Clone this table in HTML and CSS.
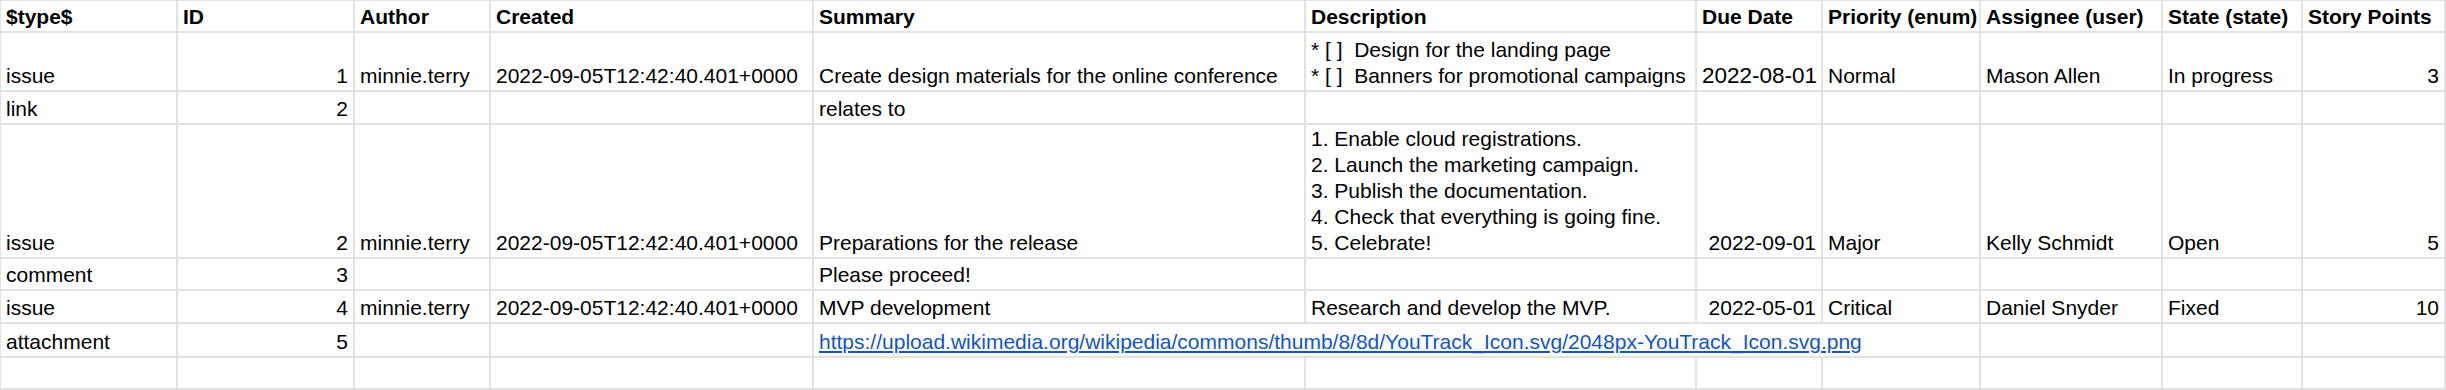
FILE: index.html
```html
<!DOCTYPE html>
<html lang="en">
<head>
<meta charset="utf-8">
<title>Sheet</title>
<link rel="stylesheet" href="styles.css">
</head>
<body>
<div class="sheet">
  <div class="cell head">$type$</div>
  <div class="cell head">ID</div>
  <div class="cell head">Author</div>
  <div class="cell head">Created</div>
  <div class="cell head">Summary</div>
  <div class="cell head">Description</div>
  <div class="cell head">Due Date</div>
  <div class="cell head">Priority (enum)</div>
  <div class="cell head">Assignee (user)</div>
  <div class="cell head">State (state)</div>
  <div class="cell head">Story Points</div>

  <div class="cell">issue</div>
  <div class="cell num">1</div>
  <div class="cell">minnie.terry</div>
  <div class="cell">2022-09-05T12:42:40.401+0000</div>
  <div class="cell">Create design materials for the online conference</div>
  <div class="cell"><div class="lines">* [ ]  Design for the landing page
* [ ]  Banners for promotional campaigns</div></div>
  <div class="cell big">2022-08-01</div>
  <div class="cell">Normal</div>
  <div class="cell">Mason Allen</div>
  <div class="cell">In progress</div>
  <div class="cell num">3</div>

  <div class="cell">link</div>
  <div class="cell num">2</div>
  <div class="cell"></div>
  <div class="cell"></div>
  <div class="cell">relates to</div>
  <div class="cell"></div>
  <div class="cell"></div>
  <div class="cell"></div>
  <div class="cell"></div>
  <div class="cell"></div>
  <div class="cell"></div>

  <div class="cell">issue</div>
  <div class="cell num">2</div>
  <div class="cell">minnie.terry</div>
  <div class="cell">2022-09-05T12:42:40.401+0000</div>
  <div class="cell">Preparations for the release</div>
  <div class="cell"><div class="lines">1. Enable cloud registrations.
2. Launch the marketing campaign.
3. Publish the documentation.
4. Check that everything is going fine.
5. Celebrate!</div></div>
  <div class="cell num">2022-09-01</div>
  <div class="cell">Major</div>
  <div class="cell">Kelly Schmidt</div>
  <div class="cell">Open</div>
  <div class="cell num">5</div>

  <div class="cell">comment</div>
  <div class="cell num">3</div>
  <div class="cell"></div>
  <div class="cell"></div>
  <div class="cell">Please proceed!</div>
  <div class="cell"></div>
  <div class="cell"></div>
  <div class="cell"></div>
  <div class="cell"></div>
  <div class="cell"></div>
  <div class="cell"></div>

  <div class="cell">issue</div>
  <div class="cell num">4</div>
  <div class="cell">minnie.terry</div>
  <div class="cell">2022-09-05T12:42:40.401+0000</div>
  <div class="cell">MVP development</div>
  <div class="cell">Research and develop the MVP.</div>
  <div class="cell num">2022-05-01</div>
  <div class="cell">Critical</div>
  <div class="cell">Daniel Snyder</div>
  <div class="cell">Fixed</div>
  <div class="cell num">10</div>

  <div class="cell">attachment</div>
  <div class="cell num">5</div>
  <div class="cell"></div>
  <div class="cell"></div>
  <div class="cell span4"><a class="link" href="#">https://upload.wikimedia.org/wikipedia/commons/thumb/8/8d/YouTrack_Icon.svg/2048px-YouTrack_Icon.svg.png</a></div>
  <div class="cell"></div>
  <div class="cell"></div>
  <div class="cell"></div>

  <div class="cell"></div>
  <div class="cell"></div>
  <div class="cell"></div>
  <div class="cell"></div>
  <div class="cell"></div>
  <div class="cell"></div>
  <div class="cell"></div>
  <div class="cell"></div>
  <div class="cell"></div>
  <div class="cell"></div>
  <div class="cell"></div>
</div>
</body>
</html>
```

FILE: styles.css
```css
* {
  box-sizing: border-box;
}

html,
body {
  margin: 0;
  padding: 0;
  background: #ffffff;
  overflow: hidden;
}

.sheet {
  display: grid;
  grid-template-columns: 177px 177px 136px 323px 492px 391px 126px 158px 182px 140px 143px;
  grid-template-rows: 32px 59px 33px 134px 32px 33px 34px 32px;
  width: max-content;
  border-top: 1px solid #e2e2e2;
  border-left: 1px solid #e2e2e2;
  font-family: "Liberation Sans", Arial, sans-serif;
  font-size: 21px;
  line-height: 26px;
  color: #000000;
}

.cell {
  display: flex;
  align-items: flex-end;
  justify-content: flex-start;
  padding: 0 5px 1px 5px;
  border-right: 2px solid #e2e2e2;
  border-bottom: 2px solid #e2e2e2;
  white-space: nowrap;
  overflow: hidden;
  min-width: 0;
}

.head {
  font-weight: bold;
}

.num {
  justify-content: flex-end;
}

.big {
  font-size: 22.5px;
}

.lines {
  white-space: pre;
}

.span4 {
  grid-column: span 4;
}

.link {
  color: #1155cc;
  text-decoration: underline;
}
```
